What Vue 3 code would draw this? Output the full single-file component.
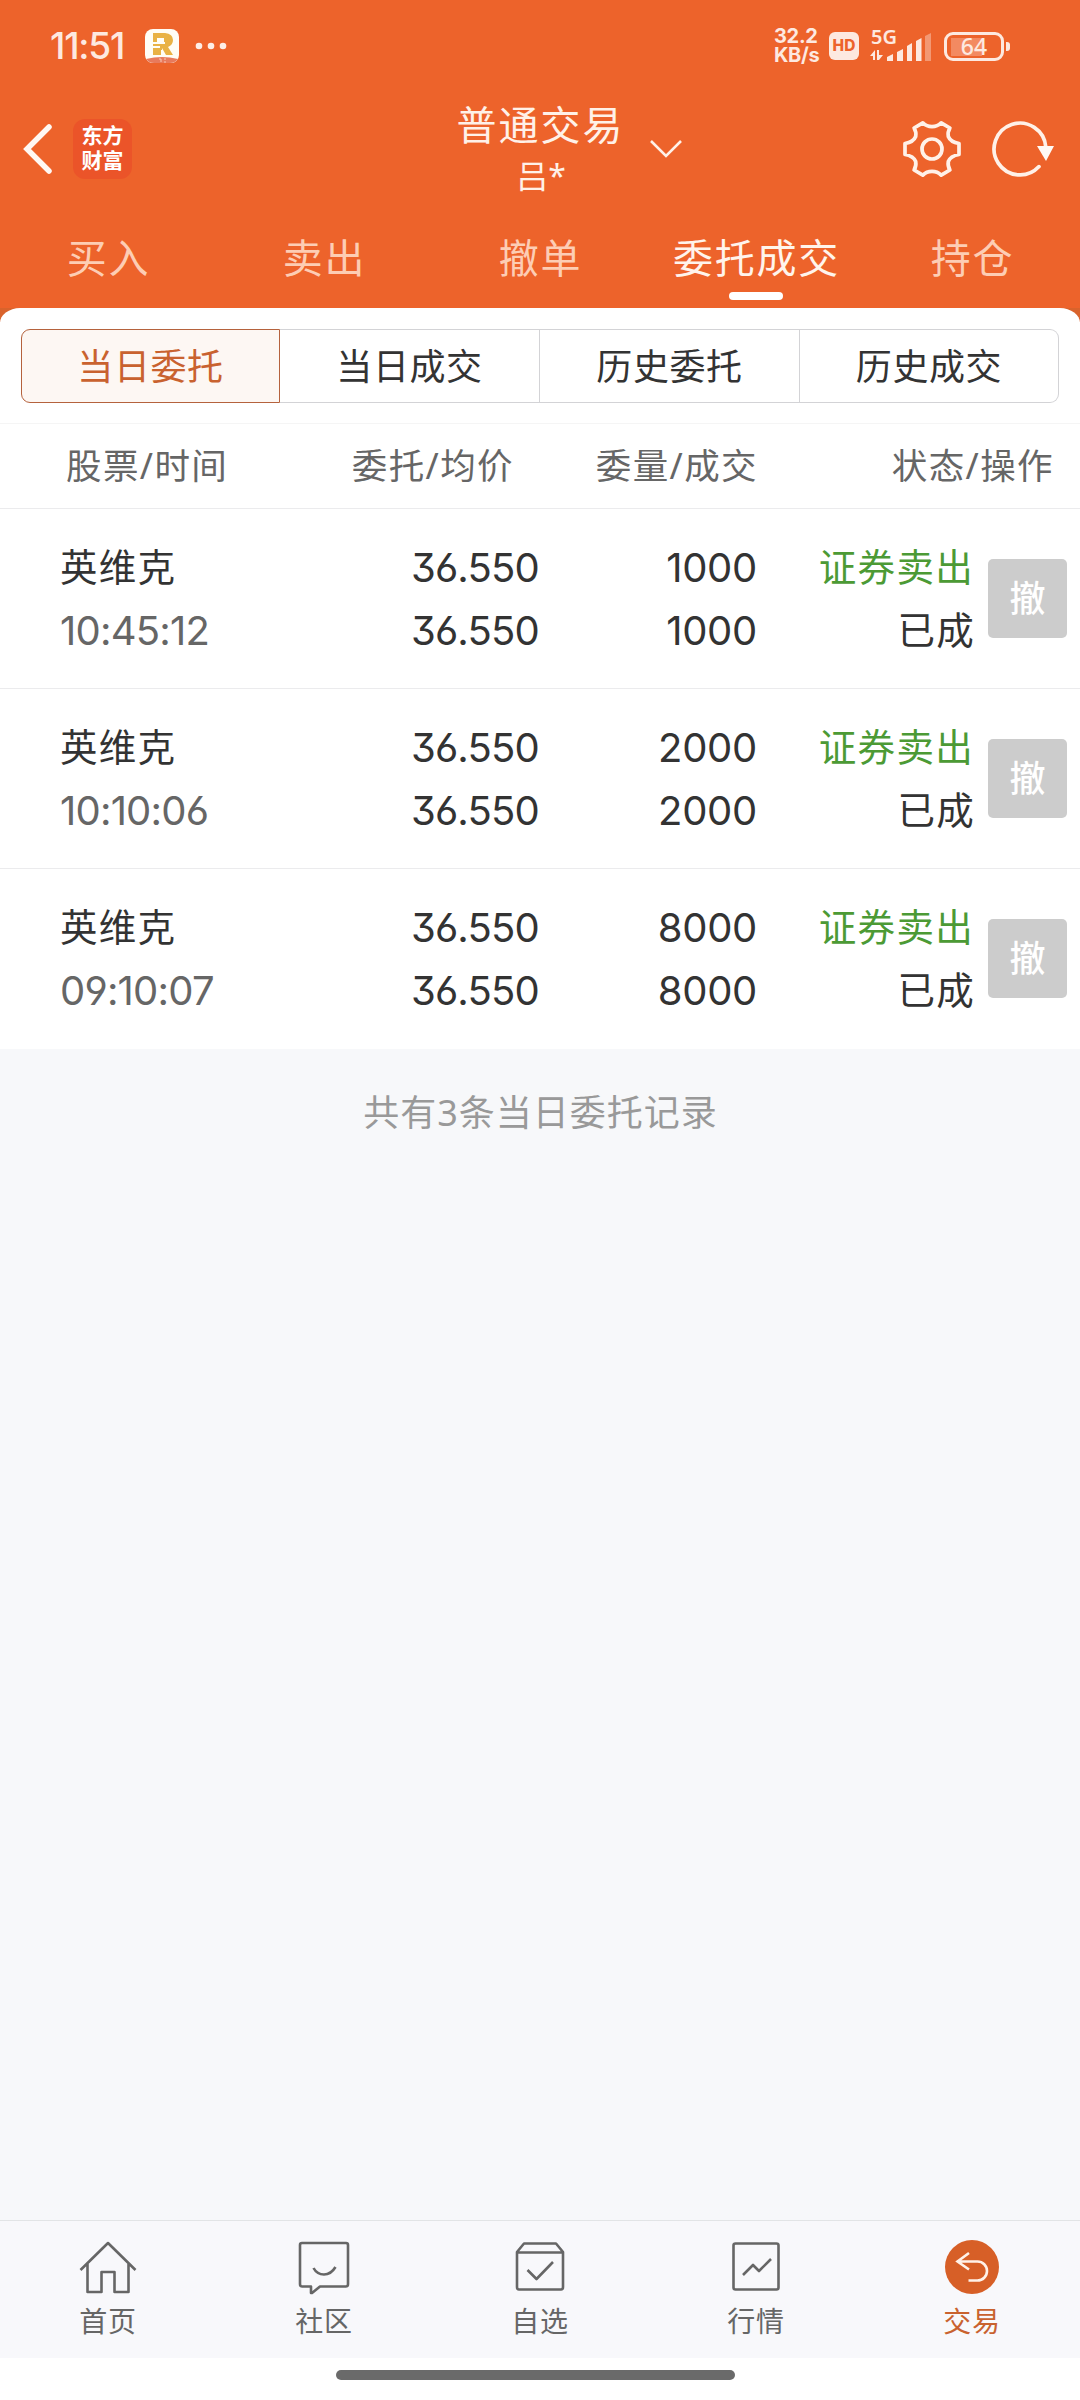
<template>
  <div class="page">
    <!-- 顶部 -->
    <header class="top">
      <div class="statusBar">
        <span class="clock">11:51</span>
        <svg class="appIcon" width="34" height="34" viewBox="0 0 34 34">
          <rect width="34" height="34" rx="8" fill="#fffdf5" />
          <path d="M1 30Q17 26 33 30Q30 34 25 34H9Q4 34 1 30Z" fill="#e87a5c" />
          <path fill-rule="evenodd" d="M8 4H20Q28 5 28 11Q28 16 23 18L28 26H21L17 19V21H16V26H8V19H15V17H8V15H20V13H19V9H12V13H8Z" fill="#e9b244" />
          <path d="M14 30h2v3M19 30h2M19 33h2" stroke="#f7c9b8" fill="none" />
        </svg>
        <svg class="dots" width="32" height="8" viewBox="0 0 32 8" fill="#fdeee7">
          <circle cx="4" cy="4" r="3.3" />
          <circle cx="16" cy="4" r="3.3" />
          <circle cx="28" cy="4" r="3.3" />
        </svg>
        <div class="speed">
          <span>32.2</span>
          <span>KB/s</span>
        </div>
        <span class="hd">HD</span>
        <div class="signal">
          <span class="net">5G</span>
          <svg width="62" height="32" viewBox="0 0 62 32" fill="#fde9e0">
            <path d="M3 31V26H0L5 20V30H3Z M7 20H9V25H13L9 30H7Z" />
            <path d="M17 27L23 24V31H17Z" />
            <path d="M27 22L33 19V31H27Z" />
            <path d="M37 16L42 13V31H37Z" />
            <path d="M46 11L51.500 8V31H46Z" />
            <path d="M55 6L61 3V31H55Z" opacity="0.4" />
          </svg>
        </div>
        <div class="battery"><span>64</span></div>
        <i class="batteryCap"></i>
      </div>

      <div class="titleBar">
        <div class="side">
          <svg width="32" height="52" viewBox="0 0 32 52">
            <path d="M27 4L5 26L27 48" fill="none" stroke="#fff8f3" stroke-width="5.500" stroke-linecap="round" />
          </svg>
          <div class="logo"><span>东方</span><span>财富</span></div>
        </div>
        <div class="title">
          <div class="titleName">普通交易</div>
          <div class="titleUser">吕*</div>
        </div>
        <svg class="arrow" width="34" height="20" viewBox="0 0 34 20">
          <path d="M2 2L17 17L32 2" fill="none" stroke="#fff1e8" stroke-width="2.600" />
        </svg>
        <div class="tools">
          <svg width="62" height="62" viewBox="-31 -31 62 62" fill="none" stroke="#fff1e8" stroke-width="3.700" stroke-linejoin="round">
            <path d="M27 5.500Q18.500 7 16.300 12.500Q15.500 17 17.900 21L9.200 26.200Q5.500 22.300 0 22.300T-9.200 26.200L-17.900 21Q-15.500 17 -16.300 12.500Q-18.500 7 -27 5.500V-5.500Q-18.500 -7 -16.300 -12.500Q-15.500 -17 -17.900 -21L-9.200 -26.200Q-5.500 -22.300 0 -22.300T9.200 -26.200L17.900 -21Q15.500 -17 16.300 -12.500Q18.500 -7 27 -5.500Z" />
            <circle r="10" />
          </svg>
          <svg width="66" height="62" viewBox="-31 -31 66 62">
            <path d="M25.800 -2A25.900 25.900 0 1 0 19 17.600" fill="none" stroke="#fff1e8" stroke-width="3.700" stroke-linecap="round" />
            <path d="M17 -3H34L26 12Z" fill="#fffaf5" />
          </svg>
        </div>
      </div>

      <nav class="tabs">
        <div v-for="tab in tabs" :key="tab" class="tab" :class="{ active: tab === activeTab }" @click="activeTab = tab">
          {{ tab }}
        </div>
      </nav>
    </header>

    <!-- 委托列表 -->
    <div class="sheetWrap">
      <section class="sheet">
        <div class="segments">
          <button
            v-for="(seg, index) in segments"
            :key="index"
            class="segment"
            :class="{ active: index === activeSegment }"
            @click="activeSegment = index"
          >
            {{ seg }}
          </button>
        </div>
        <div class="listHead">
          <span v-for="col in columns" :key="col">{{ col }}</span>
        </div>
        <div v-for="(item, index) in orders" :key="index" class="order">
          <div class="cell left">
            <span class="name">{{ item.name }}</span>
            <span class="time">{{ item.time }}</span>
          </div>
          <div class="cell num price">
            <span>{{ item.price }}</span>
            <span>{{ item.avg }}</span>
          </div>
          <div class="cell num">
            <span>{{ item.amount }}</span>
            <span>{{ item.deal }}</span>
          </div>
          <div class="cell status">
            <span class="sell">{{ item.type }}</span>
            <span class="state">{{ item.state }}</span>
          </div>
          <button class="cancel">撤</button>
        </div>
      </section>
    </div>

    <main class="rest">共有{{ orders.length }}条当日委托记录</main>

    <!-- 底部导航 -->
    <footer class="bottomNav">
      <div class="navItem">
        <svg width="60" height="60" viewBox="0 0 60 60">
          <path d="M2.500 32L30 5L57.500 32M9.500 26V54H23.500V34H36.500V54H50.500V26" />
        </svg>
        <span>首页</span>
      </div>
      <div class="navItem">
        <svg width="60" height="60" viewBox="0 0 60 60">
          <path d="M8 5H52Q54 5 54 7V46Q54 48.500 52 48.500H26L18 55H17V48.500H8Q6 48.500 6 46V7Q6 5 8 5Z" />
          <path d="M19.500 30Q23 36.500 30 36.500T41.500 29" />
        </svg>
        <span>社区</span>
      </div>
      <div class="navItem">
        <svg width="60" height="60" viewBox="0 0 60 60">
          <path d="M7 14L14 5.500H46L53 14V49Q53 51.500 51 51.500H9Q7 51.500 7 49ZM7 14.500H53" />
          <path d="M17.500 32L26.500 41L43 24" />
        </svg>
        <span>自选</span>
      </div>
      <div class="navItem">
        <svg width="60" height="60" viewBox="0 0 60 60">
          <rect x="7.500" y="5.500" width="45" height="46" rx="2" />
          <path d="M17 37L27 27L33 33L45 21" />
        </svg>
        <span>行情</span>
      </div>
      <div class="navItem active">
        <svg width="60" height="60" viewBox="0 0 60 60">
          <circle cx="30" cy="29" r="27" />
          <path d="M27 15L15.500 23.500L27 31.500M15.500 23.500H35.500A9.500 9.500 0 0 1 35.500 42.500H26.500" />
        </svg>
        <span>交易</span>
      </div>
    </footer>
    <div class="homeBar"><i></i></div>
  </div>
</template>

<script setup>
import { ref } from "vue";

const tabs = ["买入", "卖出", "撤单", "委托成交", "持仓"];
const activeTab = ref("委托成交");

const segments = ["当日委托", "当日成交", "历史委托", "历史成交"];
const activeSegment = ref(0);

const columns = ["股票/时间", "委托/均价", "委量/成交", "状态/操作"];

const orders = ref([
  { name: "英维克", time: "10:45:12", price: "36.550", avg: "36.550", amount: 1000, deal: 1000, type: "证券卖出", state: "已成" },
  { name: "英维克", time: "10:10:06", price: "36.550", avg: "36.550", amount: 2000, deal: 2000, type: "证券卖出", state: "已成" },
  { name: "英维克", time: "09:10:07", price: "36.550", avg: "36.550", amount: 8000, deal: 8000, type: "证券卖出", state: "已成" },
]);
</script>

<style>
body {
  margin: 0;
  background: #f7f8fa;
}
</style>

<style scoped>
.page {
  width: 1080px;
  height: 2400px;
  display: flex;
  flex-direction: column;
  overflow: hidden;
  font-family: "Noto Sans", "Noto Sans CJK SC", sans-serif;
  color: #333;
  background: #f7f8fa;
}

button {
  font-family: inherit;
  margin: 0;
  padding: 0;
}

svg {
  display: block;
  flex: none;
}

.top {
  height: 308px;
  background: #ed632b;
}

.statusBar {
  height: 92px;
  display: flex;
  align-items: center;
  padding: 0 70px 0 50px;
  box-sizing: border-box;
  color: #fde9e0;
}

.clock {
  width: 95px;
  font-family: "Inter", sans-serif;
  font-size: 37px;
  line-height: 46px;
  font-weight: 500;
  letter-spacing: -1.2px;
}

.dots {
  margin-left: 16px;
}

.speed {
  margin-left: auto;
  width: 55px;
  display: flex;
  flex-direction: column;
  font-family: "Inter", sans-serif;
  font-size: 20px;
  line-height: 19px;
  font-weight: 700;
  letter-spacing: -0.3px;
}

.hd {
  width: 30px;
  height: 28px;
  border-radius: 6px;
  background: #fde9e0;
  color: #ed632b;
  font: 800 15.5px/28px "Inter", sans-serif;
  text-align: center;
}

.signal {
  position: relative;
  margin-left: 11px;
  width: 74px;
}

.net {
  position: absolute;
  left: 1px;
  top: -3px;
  font-size: 20px;
  line-height: 20px;
  font-weight: 600;
}

.battery {
  width: 60px;
  height: 29px;
  box-sizing: border-box;
  border: 3px solid #fde9e0;
  border-radius: 9px;
  padding: 3px;
  display: flex;
  justify-content: center;
  align-items: center;
  background: linear-gradient(#f38a61, #f38a61) 4px 3px / 31px 18px no-repeat;
  font-size: 23px;
  font-weight: 500;
  line-height: 20px;
}

.batteryCap {
  width: 4px;
  height: 9px;
  margin-left: 2px;
  border-radius: 0 3px 3px 0;
  background: #fde9e0;
}

.titleBar {
  height: 114px;
  display: grid;
  grid-template-columns: 440px 200px 60px 1fr;
  align-items: center;
  color: #fff1e8;
}

.side {
  display: flex;
  align-items: center;
  gap: 19px;
  padding-left: 22px;
}

.logo {
  width: 59px;
  height: 60px;
  border-radius: 12px;
  background: #eb5429;
  display: flex;
  flex-direction: column;
  align-items: center;
  justify-content: center;
  padding-bottom: 2px;
  box-sizing: border-box;
  font-size: 21px;
  line-height: 25px;
  font-weight: 700;
  color: #fff;
}

.title {
  padding-top: 2px;
  text-align: center;
}

.titleName {
  padding-left: 1px;
  font-size: 40px;
  line-height: 50px;
  letter-spacing: 2px;
}

.titleUser {
  padding-left: 2px;
  font-size: 32px;
  line-height: 51px;
}

.arrow {
  margin-left: 9px;
}

.tools {
  display: flex;
  justify-content: flex-end;
  gap: 26px;
  padding-right: 25px;
}

.tabs {
  display: flex;
  height: 102px;
}

.tab {
  position: relative;
  width: 216px;
  padding-left: 1px;
  box-sizing: border-box;
  line-height: 103px;
  font-size: 40px;
  letter-spacing: 1.8px;
  text-align: center;
  color: #fdcdb4;
}

.tab.active {
  color: #fff4ec;
}

.tab.active::after {
  content: "";
  position: absolute;
  left: 81px;
  bottom: 8px;
  width: 54px;
  height: 8px;
  border-radius: 4px;
  background: #fff;
}

.sheetWrap {
  background: linear-gradient(#d9632c 14px, #fff 14px);
}

.sheet {
  border-radius: 20px 20px 0 0 / 15px 15px 0 0;
  background: #fff;
}

.segments {
  display: grid;
  grid-template-columns: 259px 260px 260px 259px;
  height: 116px;
  padding: 21px 21px 20px;
  box-sizing: border-box;
  border-bottom: 1px solid #f5f5f5;
}

.segment {
  border: 1px solid #d3d3d6;
  border-left-width: 0;
  padding-bottom: 3px;
  background: #fff;
  color: #333;
  font-size: 36px;
  letter-spacing: 0.6px;
}

.segment:first-child {
  border-left-width: 1px;
  border-radius: 9px 0 0 9px;
}

.segment:last-child {
  border-radius: 0 9px 9px 0;
}

.segment.active {
  border: 1px solid #b5623d;
  background: #fdf7f3;
  color: #c9622f;
}

.listHead {
  display: grid;
  grid-template-columns: 300px 214px 244px 1fr;
  height: 85px;
  box-sizing: border-box;
  padding-right: 26px;
  border-bottom: 1px solid #ebebed;
  font-size: 35.5px;
  line-height: 83px;
  letter-spacing: 1.4px;
  text-align: right;
  color: #666;
}

.listHead span:first-child {
  padding-left: 66px;
  text-align: left;
}

.order {
  display: grid;
  grid-template-columns: 300px 240px 217px 217px 79px;
  align-items: center;
  height: 180px;
  box-sizing: border-box;
  border-bottom: 1px solid #ebebed;
}

.order:last-child {
  border-bottom-color: #fff;
}

.cell {
  display: flex;
  flex-direction: column;
  align-items: flex-end;
  font-size: 37.5px;
  line-height: 63px;
  letter-spacing: 1.3px;
}

.cell.left {
  align-items: flex-start;
  padding-left: 60px;
}

.cell .name,
.cell.status {
  margin-top: -1px;
}

.cell .name {
  margin-bottom: 1px;
}

/* 平顶3、开口6/9 */
.cell.num,
.cell .time {
  font-family: "Inter", sans-serif;
  font-size: 40px;
  font-feature-settings: "cv03", "cv04", "cv09";
  letter-spacing: -0.3px;
}

.cell.price {
  padding-right: 1px;
  letter-spacing: -0.8px;
}

.cell .time {
  letter-spacing: -0.8px;
  color: #666;
}

.sell {
  color: #4c9a35;
}

.state {
  margin-right: -1px;
}

.cancel {
  width: 79px;
  height: 79px;
  margin-left: 14px;
  border: 0;
  border-radius: 5px;
  padding-bottom: 4px;
  background: #ccc;
  color: #fff;
  font-size: 36px;
  font-weight: 500;
}

.rest {
  flex: 1;
  padding-top: 38px;
  padding-left: 1px;
  text-align: center;
  font-size: 36px;
  line-height: 52px;
  letter-spacing: 1px;
  color: #999;
}

.bottomNav {
  display: flex;
  height: 138px;
  box-sizing: border-box;
  border-top: 1px solid #e2e4e6;
  background: #f8f8fb;
}

.navItem {
  width: 216px;
  padding-top: 17px;
  display: flex;
  flex-direction: column;
  align-items: center;
  font-size: 28px;
  line-height: 46px;
  letter-spacing: 0.8px;
  color: #666;
}

.navItem svg {
  fill: none;
  stroke: #666;
  stroke-width: 2.6;
  stroke-linejoin: round;
}

.navItem.active {
  color: #c9622f;
}

.navItem.active svg {
  stroke: #fff1e8;
  stroke-linejoin: miter;
}

.navItem.active circle {
  fill: #d75f27;
  stroke: none;
}

.homeBar {
  height: 42px;
  padding: 12px 0 0 336px;
  box-sizing: border-box;
  background: #fff;
}

.homeBar i {
  display: block;
  width: 399px;
  height: 10px;
  border-radius: 5px;
  background: #6a6a6a;
}
</style>
